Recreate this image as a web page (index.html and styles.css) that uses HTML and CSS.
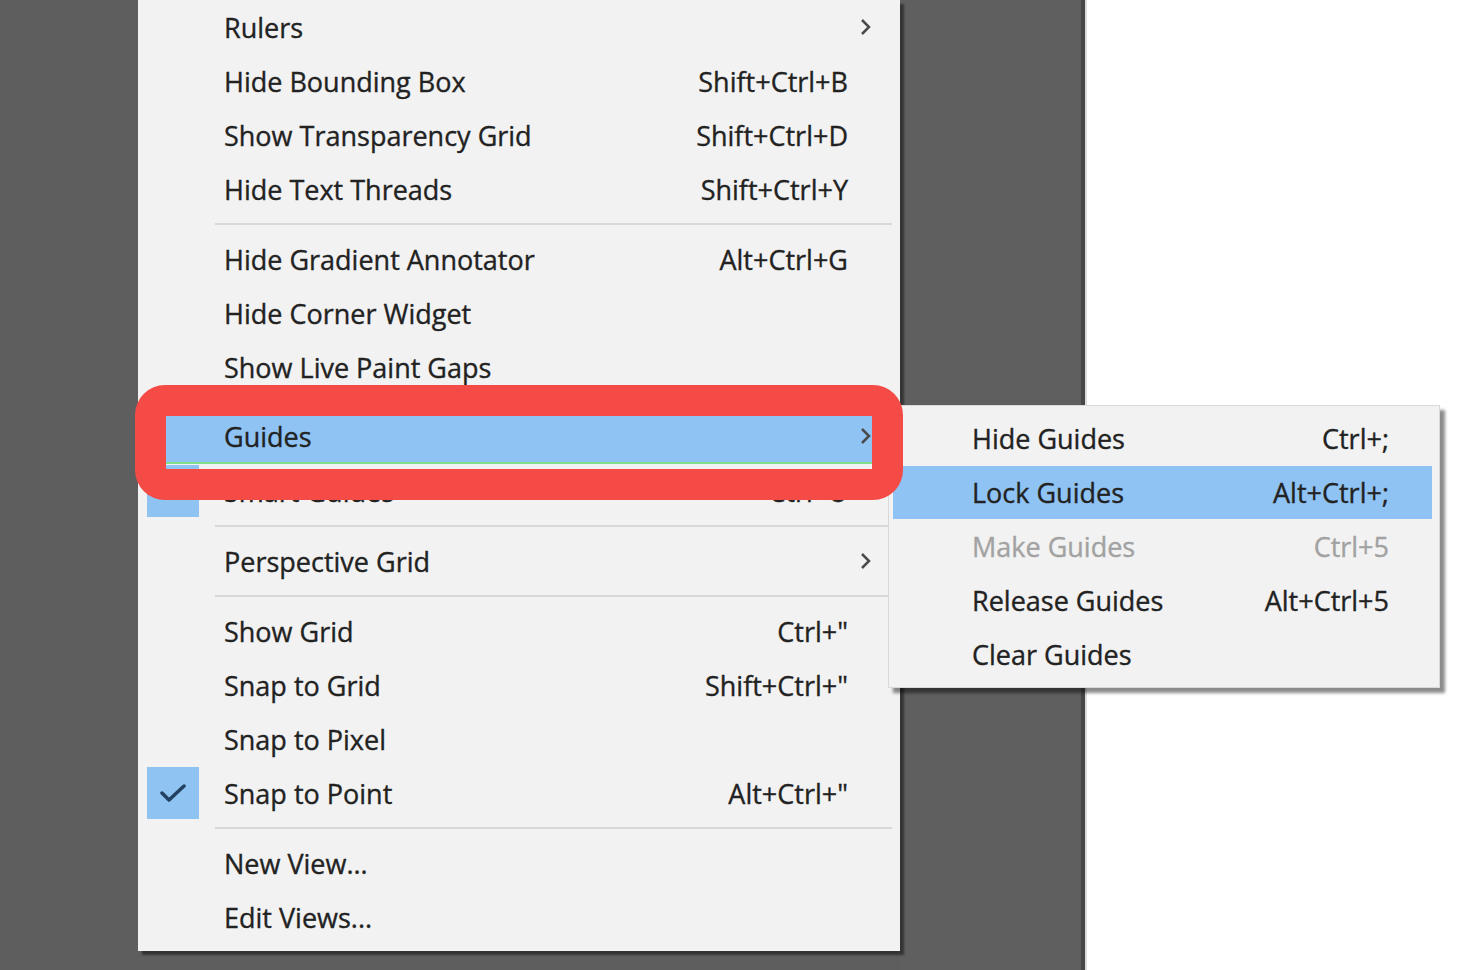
FILE: index.html
```html
<!DOCTYPE html>
<html lang="en">
<head>
<meta charset="utf-8">
<title>View menu - Guides</title>
<link rel="stylesheet" href="styles.css">
</head>
<body>
<div class="stage">
  <div class="side"></div>
  <div class="menu-col">
    <div class="menu main">
      <div class="item"><span class="check"></span><span class="label">Rulers</span><span class="key"></span><span class="arrow"><svg width="12" height="20" viewBox="0 0 12 20"><polyline points="2,3 9,10 2,17"/></svg></span></div>
      <div class="item"><span class="check"></span><span class="label">Hide Bounding Box</span><span class="key">Shift+Ctrl+B</span><span class="arrow"></span></div>
      <div class="item"><span class="check"></span><span class="label">Show Transparency Grid</span><span class="key">Shift+Ctrl+D</span><span class="arrow"></span></div>
      <div class="item"><span class="check"></span><span class="label">Hide Text Threads</span><span class="key">Shift+Ctrl+Y</span><span class="arrow"></span></div>
      <div class="sep"></div>
      <div class="item"><span class="check"></span><span class="label">Hide Gradient Annotator</span><span class="key">Alt+Ctrl+G</span><span class="arrow"></span></div>
      <div class="item"><span class="check"></span><span class="label">Hide Corner Widget</span><span class="key"></span><span class="arrow"></span></div>
      <div class="item"><span class="check"></span><span class="label">Show Live Paint Gaps</span><span class="key"></span><span class="arrow"></span></div>
      <div class="sep"></div>
      <div class="item active"><span class="check"></span><span class="label">Guides</span><span class="key"></span><span class="arrow"><svg width="12" height="20" viewBox="0 0 12 20"><polyline points="2,3 9,10 2,17"/></svg></span></div>
      <div class="item"><span class="check on"><svg width="26" height="18" viewBox="0 0 26 18"><polyline points="2,9 9,16 24,2"/></svg></span><span class="label">Smart Guides</span><span class="key">Ctrl+U</span><span class="arrow"></span></div>
      <div class="sep"></div>
      <div class="item"><span class="check"></span><span class="label">Perspective Grid</span><span class="key"></span><span class="arrow"><svg width="12" height="20" viewBox="0 0 12 20"><polyline points="2,3 9,10 2,17"/></svg></span></div>
      <div class="sep"></div>
      <div class="item"><span class="check"></span><span class="label">Show Grid</span><span class="key">Ctrl+"</span><span class="arrow"></span></div>
      <div class="item"><span class="check"></span><span class="label">Snap to Grid</span><span class="key">Shift+Ctrl+"</span><span class="arrow"></span></div>
      <div class="item"><span class="check"></span><span class="label">Snap to Pixel</span><span class="key"></span><span class="arrow"></span></div>
      <div class="item"><span class="check on"><svg width="26" height="18" viewBox="0 0 26 18"><polyline points="2,9 9,16 24,2"/></svg></span><span class="label">Snap to Point</span><span class="key">Alt+Ctrl+"</span><span class="arrow"></span></div>
      <div class="sep"></div>
      <div class="item"><span class="check"></span><span class="label">New View...</span><span class="key"></span><span class="arrow"></span></div>
      <div class="item"><span class="check"></span><span class="label">Edit Views...</span><span class="key"></span><span class="arrow"></span></div>
    </div>
  </div>
  <div class="panel"></div>
  <div class="blank"></div>

  <div class="menu submenu">
    <div class="item"><span class="label">Hide Guides</span><span class="key">Ctrl+;</span></div>
    <div class="item active"><span class="label">Lock Guides</span><span class="key">Alt+Ctrl+;</span></div>
    <div class="item disabled"><span class="label">Make Guides</span><span class="key">Ctrl+5</span></div>
    <div class="item"><span class="label">Release Guides</span><span class="key">Alt+Ctrl+5</span></div>
    <div class="item"><span class="label">Clear Guides</span><span class="key"></span></div>
  </div>

  <div class="annot"></div>
</div>
</body>
</html>
```

FILE: styles.css
```css
* { box-sizing: border-box; }

html, body {
  margin: 0;
  padding: 0;
  width: 1464px;
  height: 970px;
  overflow: hidden;
  background: #ffffff;
}

.stage {
  position: relative;
  display: flex;
  width: 1464px;
  height: 970px;
  font-family: "Open Sans", "Noto Sans", "Liberation Sans", sans-serif;
  font-size: 27px;
  color: #222222;
  -webkit-text-stroke: 0.35px currentColor;
}

.side {
  width: 138px;
  background: #5e5e5e;
}

.menu-col {
  width: 762px;
  background: #5e5e5e;
  position: relative;
  z-index: 1;
}

.menu {
  background: #f2f2f2;
}

.main {
  width: 762px;
  padding: 0 0 7px;
  box-shadow: 4px 4px 2px rgba(0, 0, 0, 0.45);
}

.panel {
  width: 185px;
  background: #5f5f5f;
  border-right: 4px solid #474747;
}

.blank {
  flex: 1;
  background: #ffffff;
  border-left: 2px solid #dcdcdc;
}

.item {
  display: flex;
  align-items: center;
  height: 54px;
  margin: 0 5px;
  white-space: nowrap;
}

.main .item .check {
  width: 52px;
  height: 52px;
  margin-left: 4px;
  display: flex;
  align-items: center;
  justify-content: center;
}

.check.on {
  background: #8fc3f1;
}

.check svg polyline {
  fill: none;
  stroke: #22405f;
  stroke-width: 3.5;
  stroke-linecap: round;
  stroke-linejoin: round;
}

.main .label {
  flex: 1;
  padding-left: 25px;
}

.key {
  text-align: right;
}

.main .arrow {
  width: 47px;
  padding-left: 12px;
  display: flex;
  align-items: center;
}

.arrow svg polyline {
  fill: none;
  stroke: #4a4a4a;
  stroke-width: 2.5;
}

.item.active {
  background: #8fc3f3;
}

.main .item.active {
  border-bottom: 2px solid #7fdf8c;
}

.sep {
  height: 16px;
  display: flex;
  align-items: center;
  padding: 0 8px 0 77px;
}

.sep::before {
  content: "";
  display: block;
  flex: 1;
  height: 2px;
  background: #d8d8d8;
}

.submenu {
  position: absolute;
  left: 888px;
  top: 405px;
  width: 552px;
  height: 283px;
  padding-top: 5px;
  border: 1px solid #d9d9d9;
  box-shadow: 5px 5px 3px rgba(0, 0, 0, 0.45);
  z-index: 2;
}

.submenu .item {
  margin: 0 7px 0 4px;
  padding: 0 43px 0 79px;
}

.submenu .item.active {
  height: 53px;
  margin-top: 1px;
}

.submenu .label {
  flex: 1;
}

.item.disabled {
  color: #a2a2a2;
}

.annot {
  position: absolute;
  left: 135px;
  top: 385px;
  width: 768px;
  height: 115px;
  border: 31px solid #f44b46;
  border-radius: 30px;
  z-index: 3;
}
```
